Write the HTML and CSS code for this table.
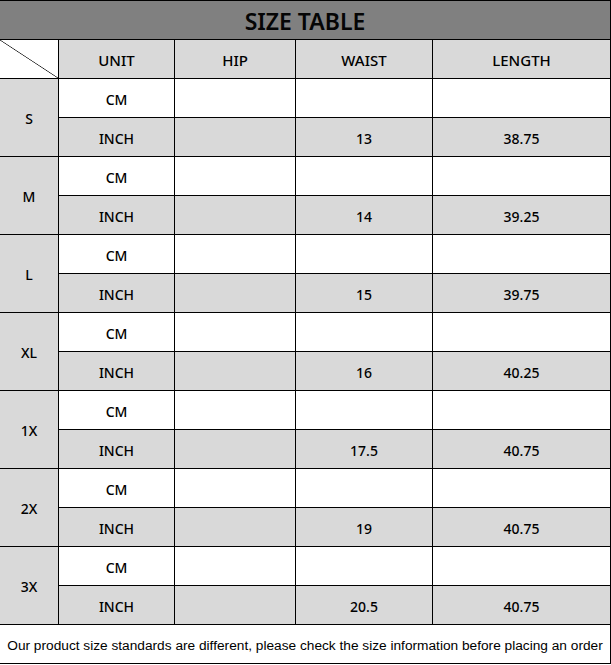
FILE: index.html
```html
<!DOCTYPE html>
<html>
<head>
<meta charset="utf-8">
<link rel="stylesheet" href="styles.css">
</head>
<body>
<div class="sheet">
  <div class="title">SIZE TABLE</div>
  <div class="hd diag"></div>
  <div class="hd">UNIT</div>
  <div class="hd">HIP</div>
  <div class="hd">WAIST</div>
  <div class="hd">LENGTH</div>

  <div class="size">S</div>
  <div class="w">CM</div><div class="w"></div><div class="w"></div><div class="w"></div>
  <div class="g">INCH</div><div class="g"></div><div class="g">13</div><div class="g">38.75</div>

  <div class="size">M</div>
  <div class="w">CM</div><div class="w"></div><div class="w"></div><div class="w"></div>
  <div class="g">INCH</div><div class="g"></div><div class="g">14</div><div class="g">39.25</div>

  <div class="size">L</div>
  <div class="w">CM</div><div class="w"></div><div class="w"></div><div class="w"></div>
  <div class="g">INCH</div><div class="g"></div><div class="g">15</div><div class="g">39.75</div>

  <div class="size">XL</div>
  <div class="w">CM</div><div class="w"></div><div class="w"></div><div class="w"></div>
  <div class="g">INCH</div><div class="g"></div><div class="g">16</div><div class="g">40.25</div>

  <div class="size">1X</div>
  <div class="w">CM</div><div class="w"></div><div class="w"></div><div class="w"></div>
  <div class="g">INCH</div><div class="g"></div><div class="g">17.5</div><div class="g">40.75</div>

  <div class="size">2X</div>
  <div class="w">CM</div><div class="w"></div><div class="w"></div><div class="w"></div>
  <div class="g">INCH</div><div class="g"></div><div class="g">19</div><div class="g">40.75</div>

  <div class="size">3X</div>
  <div class="w">CM</div><div class="w"></div><div class="w"></div><div class="w"></div>
  <div class="g">INCH</div><div class="g"></div><div class="g">20.5</div><div class="g">40.75</div>

  <div class="foot">Our product size standards are different, please check the size information before placing an order</div>
</div>
</body>
</html>
```

FILE: styles.css
```css
html, body {
  margin: 0;
  padding: 0;
  background: #fff;
}
.sheet {
  display: grid;
  grid-template-columns: 58px 115px 120px 136px 177px;
  grid-auto-rows: 38px;
  gap: 1px;
  padding: 1px 1px 1px 0;
  width: 610px;
  background: #000;
  font-family: "Noto Sans", "Liberation Sans", sans-serif;
  font-size: 14px;
  font-weight: 500;
  color: #000;
}
.sheet > div {
  display: flex;
  align-items: center;
  justify-content: center;
  padding-top: 2px;
  box-sizing: border-box;
}
.title {
  grid-column: 1 / -1;
  background: #808080;
  font-size: 23px;
  font-weight: 600;
  color: #050505;
  padding-top: 3px;
}
.hd {
  background: #d9d9d9;
  font-size: 15px;
}
.diag {
  background: linear-gradient(to top right, #fff calc(50% - 0.7px), #222 50%, #fff calc(50% + 0.7px));
}
.size {
  grid-row: span 2;
  background: #d9d9d9;
}
.w {
  background: #fff;
}
.g {
  background: #d9d9d9;
}
.foot {
  grid-column: 1 / -1;
  background: #fff;
  font-family: "Liberation Sans", Arial, sans-serif;
  font-weight: 400;
  font-size: 13.7px;
  color: #000;
}
```
